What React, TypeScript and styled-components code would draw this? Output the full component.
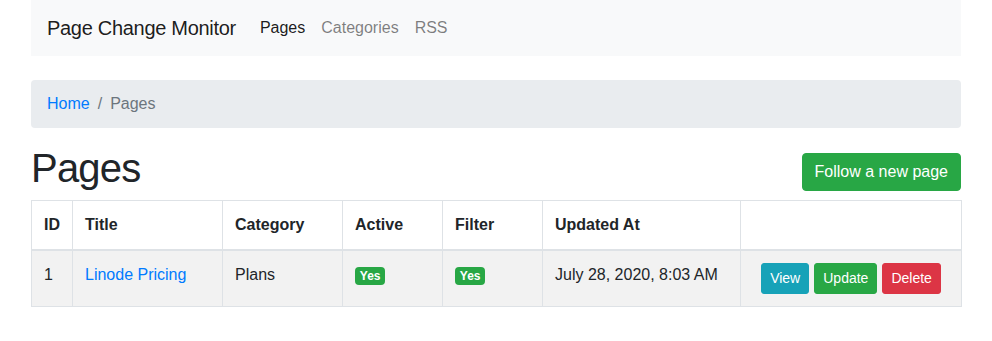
import React from "react";
import styled, { createGlobalStyle } from "styled-components";

const Global = createGlobalStyle`
  * { box-sizing: border-box; }
  body {
    margin: 0;
    font-family: "Liberation Sans", Arial, sans-serif;
    font-size: 16px;
    line-height: 1.5;
    color: #212529;
    background: #fff;
  }
`;

const Container = styled.div`
  width: 960px;
  margin: 0 auto;
  padding: 0 15px;
`;

const Navbar = styled.nav`
  display: flex;
  align-items: center;
  background: #f8f9fa;
  padding: 8px 16px;
  margin-bottom: 24px;
`;

const Brand = styled.a`
  font-size: 20px;
  line-height: 30px;
  padding: 5px 0;
  margin-right: 16px;
  letter-spacing: -0.3px;
  color: rgba(0, 0, 0, 0.9);
  text-decoration: none;
`;

const NavList = styled.ul`
  display: flex;
  list-style: none;
  margin: 0;
  padding: 0;
`;

const NavLink = styled.a<{ $active?: boolean }>`
  display: block;
  padding: 8px;
  color: ${(p) => (p.$active ? "rgba(0,0,0,0.9)" : "rgba(0,0,0,0.5)")};
  text-decoration: none;
`;

const Breadcrumb = styled.ol`
  display: flex;
  list-style: none;
  margin: 0 0 16px;
  padding: 12px 16px;
  background: #e9ecef;
  border-radius: 4px;
`;

const Crumb = styled.li<{ $active?: boolean }>`
  color: ${(p) => (p.$active ? "#6c757d" : "inherit")};
  &:not(:first-child)::before {
    content: "/";
    color: #6c757d;
    padding: 0 8px;
  }
`;

const Link = styled.a`
  color: #007bff;
  text-decoration: none;
`;

const Header = styled.div`
  display: flex;
  justify-content: space-between;
  align-items: center;
`;

const Title = styled.h1`
  font-size: 40px;
  font-weight: 500;
  line-height: 1.2;
  letter-spacing: -0.8px;
  margin: 0 0 8px;
`;

const Button = styled.a<{ $variant: "success" | "info" | "danger"; $small?: boolean }>`
  display: inline-block;
  color: #fff;
  text-decoration: none;
  border: 1px solid
    ${(p) => (p.$variant === "success" ? "#28a745" : p.$variant === "info" ? "#17a2b8" : "#dc3545")};
  background: ${(p) =>
    p.$variant === "success" ? "#28a745" : p.$variant === "info" ? "#17a2b8" : "#dc3545"};
  font-size: ${(p) => (p.$small ? "14px" : "16px")};
  line-height: ${(p) => (p.$small ? "21px" : "24px")};
  padding: ${(p) => (p.$small ? "4px 8px" : "6px 12px")};
  border-radius: ${(p) => (p.$small ? "3px" : "4px")};
`;

const Table = styled.table`
  width: 100%;
  border-collapse: collapse;
  table-layout: fixed;
  border: 1px solid #dee2e6;
  margin-bottom: 16px;
`;

const Th = styled.th`
  text-align: left;
  font-weight: 700;
  padding: 12px;
  vertical-align: bottom;
  border: 1px solid #dee2e6;
  border-bottom-width: 2px;
`;

const Row = styled.tr`
  background: rgba(0, 0, 0, 0.05);
`;

const Td = styled.td`
  padding: 12px;
  vertical-align: top;
  border: 1px solid #dee2e6;
`;

const Badge = styled.span`
  display: inline-block;
  font-size: 12px;
  font-weight: 700;
  line-height: 1;
  padding: 3px 4.8px;
  border-radius: 4px;
  background: #28a745;
  color: #fff;
  vertical-align: baseline;
`;

const Actions = styled.div`
  display: flex;
  justify-content: center;
  gap: 5px;
`;

export default function App() {
  return (
    <>
      <Global />
      <Container>
        <Navbar>
          <Brand href="#">Page Change Monitor</Brand>
          <NavList>
            <li><NavLink $active href="#">Pages</NavLink></li>
            <li><NavLink href="#">Categories</NavLink></li>
            <li><NavLink href="#">RSS</NavLink></li>
          </NavList>
        </Navbar>
        <Breadcrumb>
          <Crumb><Link href="#">Home</Link></Crumb>
          <Crumb $active>Pages</Crumb>
        </Breadcrumb>
        <Header>
          <Title>Pages</Title>
          <Button $variant="success" href="#">Follow a new page</Button>
        </Header>
        <Table>
          <colgroup>
            <col style={{ width: 41 }} />
            <col style={{ width: 150 }} />
            <col style={{ width: 120 }} />
            <col style={{ width: 100 }} />
            <col style={{ width: 100 }} />
            <col style={{ width: 198 }} />
            <col style={{ width: 221 }} />
          </colgroup>
          <thead>
            <tr>
              <Th>ID</Th>
              <Th>Title</Th>
              <Th>Category</Th>
              <Th>Active</Th>
              <Th>Filter</Th>
              <Th>Updated At</Th>
              <Th></Th>
            </tr>
          </thead>
          <tbody>
            <Row>
              <Td>1</Td>
              <Td><Link href="#">Linode Pricing</Link></Td>
              <Td>Plans</Td>
              <Td><Badge>Yes</Badge></Td>
              <Td><Badge>Yes</Badge></Td>
              <Td>July 28, 2020, 8:03 AM</Td>
              <Td>
                <Actions>
                  <Button $small $variant="info" href="#">View</Button>
                  <Button $small $variant="success" href="#">Update</Button>
                  <Button $small $variant="danger" href="#">Delete</Button>
                </Actions>
              </Td>
            </Row>
          </tbody>
        </Table>
      </Container>
    </>
  );
}
